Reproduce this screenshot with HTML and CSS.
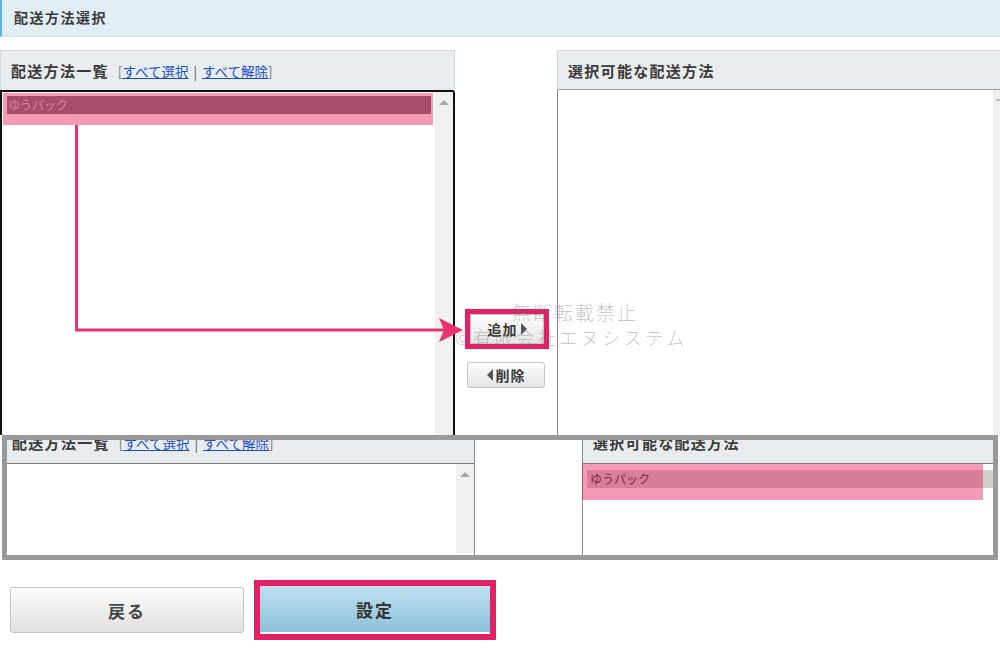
FILE: index.html
```html
<!DOCTYPE html>
<html lang="ja">
<head>
<meta charset="utf-8">
<title>配送方法選択</title>
<link rel="stylesheet" href="styles.css">
</head>
<body>
<div class="page">
  <div class="title">配送方法選択</div>

  <div class="transfer">
    <section class="pane pane-left">
      <div class="pane-head">
        <span class="pane-title">配送方法一覧</span>
        <span class="bulk">[<a href="#">すべて選択</a><span class="sep">|</span><a href="#">すべて解除</a>]</span>
      </div>
      <div class="listbox focused">
        <div class="list-body">
          <div class="item item-dim">ゆうパック</div>
        </div>
        <div class="scrollbar"><span class="arrow-up"></span></div>
      </div>
    </section>

    <div class="mover">
      <div class="callout-frame">
        <button class="btn-move btn-add">追加<span class="tri-right"></span></button>
      </div>
      <button class="btn-move btn-remove"><span class="tri-left"></span>削除</button>
    </div>

    <section class="pane pane-right">
      <div class="pane-head"><span class="pane-title">選択可能な配送方法</span></div>
      <div class="listbox plain">
        <div class="list-body"></div>
        <div class="scrollbar narrow"><span class="arrow-up small"></span></div>
      </div>
    </section>
  </div>

  <div class="inset">
    <div class="mini-left">
      <div class="mini-head">
        <span class="mini-text"><span class="pane-title">配送方法一覧</span><span class="bulk">[<a href="#">すべて選択</a><span class="sep">|</span><a href="#">すべて解除</a>]</span></span>
      </div>
      <div class="mini-list">
        <div class="mini-body"></div>
        <div class="scrollbar mini-scroll"><span class="arrow-up"></span></div>
      </div>
    </div>
    <div class="mini-mid"></div>
    <div class="mini-right">
      <div class="mini-head">
        <span class="mini-text"><span class="pane-title">選択可能な配送方法</span></span>
      </div>
      <div class="mini-list">
        <div class="mini-body">
          <div class="mini-item">ゆうパック</div>
        </div>
      </div>
    </div>
  </div>

  <div class="actions">
    <button class="btn-back">戻る</button>
    <div class="callout-frame big">
      <button class="btn-set">設定</button>
    </div>
  </div>

  <div class="hl hl-top"></div>
  <div class="hl hl-bottom"></div>

  <svg class="guide" width="470" height="345" viewBox="0 0 470 345">
    <polyline points="76.5,125 76.5,330 446,330" fill="none" stroke="#e8336e" stroke-width="3"/>
    <polygon points="463,330 439,318 444,330 439,342" fill="#e8336e"/>
  </svg>

  <div class="watermark">
    <div class="wm-line1">無断転載禁止</div>
    <div class="wm-line2">©有限会社エヌシステム</div>
  </div>
</div>
</body>
</html>
```

FILE: styles.css
```css
* { box-sizing: border-box; }

html, body {
  margin: 0;
  padding: 0;
  background: #ffffff;
}

body {
  font-family: "Noto Sans CJK JP", "Noto Sans", "Liberation Sans", sans-serif;
  color: #333333;
  width: 1000px;
  height: 648px;
  overflow: hidden;
}

.page {
  position: relative;
  width: 1000px;
  height: 648px;
}

/* title bar */
.title {
  height: 37px;
  background: #e2edf3;
  border-left: 2px solid #5fb2e6;
  border-bottom: 1px solid #cfe4ef;
  padding-left: 12px;
  font-size: 14px;
  font-weight: bold;
  letter-spacing: 1.5px;
  line-height: 35px;
  color: #3a3a3a;
}

/* transfer area */
.transfer {
  margin-top: 13px;
  height: 385px;
  display: flex;
}

.pane {
  display: flex;
  flex-direction: column;
}

.pane-left { width: 455px; }
.pane-right { width: 443px; }

.pane-head {
  height: 40px;
  background: #e9ecee;
  border: 1px solid #d3d7d9;
  border-bottom: none;
  padding-left: 10px;
  display: flex;
  align-items: center;
}

.pane-right .pane-head {
  border-right: none;
  border-bottom: 1px solid #9a9a9a;
}

.pane-title {
  font-size: 15px;
  font-weight: bold;
  letter-spacing: 1.3px;
  color: #3a3a3a;
}

.bulk {
  font-size: 13.5px;
  color: #777777;
  margin-left: 9px;
}

.bulk a {
  color: #1b4fd0;
  text-decoration: underline;
}

.sep {
  color: #555555;
  margin: 0 5px;
}

.listbox {
  flex: 1;
  display: flex;
  background: #ffffff;
}

.listbox.focused {
  border: 2px solid #111111;
  border-bottom: none;
  border-radius: 0 3px 0 0;
}

.listbox.plain {
  border-left: 1px solid #8a8a8a;
}

.list-body {
  flex: 1;
  padding: 4px 4px 0 5px;
}

.item {
  height: 18px;
  font-size: 12px;
  line-height: 18px;
  padding-left: 1px;
}

.item-dim {
  background: #7d7d80;
  color: #d4d4d4;
}

.scrollbar {
  width: 18px;
  background: #f0f0f0;
  display: flex;
  justify-content: center;
  padding-top: 8px;
}

.scrollbar.narrow {
  width: 7px;
  justify-content: flex-start;
  padding-left: 2px;
}

.arrow-up {
  width: 0;
  height: 0;
  border-left: 5px solid transparent;
  border-right: 5px solid transparent;
  border-bottom: 5px solid #a8a8a8;
}

.arrow-up.small {
  border-left-width: 3px;
  border-right-width: 3px;
  border-bottom-width: 3px;
  border-bottom-color: #b8b8b8;
}

/* mover buttons */
.mover {
  width: 102px;
  display: flex;
  flex-direction: column;
  align-items: flex-start;
  padding-top: 259px;
}

.callout-frame {
  border: 5px solid #e31f65;
  display: flex;
}

.mover .callout-frame {
  margin-left: 10px;
}

.btn-move {
  font-family: inherit;
  font-size: 14px;
  font-weight: bold;
  color: #3a3a3a;
  letter-spacing: 1px;
  background: linear-gradient(#fdfdfd, #e4e4e4);
  border: 1px solid #c6c6c6;
  border-radius: 3px;
  display: flex;
  align-items: center;
  justify-content: center;
  gap: 3px;
  padding: 0;
}

.btn-add {
  width: 74px;
  height: 30px;
  border-radius: 0;
}

.btn-remove {
  width: 78px;
  height: 26px;
  margin-top: 13px;
  margin-left: 12px;
}

.tri-right {
  width: 0;
  height: 0;
  border-top: 6px solid transparent;
  border-bottom: 6px solid transparent;
  border-left: 6px solid #555555;
}

.tri-left {
  width: 0;
  height: 0;
  border-top: 6px solid transparent;
  border-bottom: 6px solid transparent;
  border-right: 6px solid #555555;
}

/* inset capture */
.inset {
  margin: 0 2px;
  height: 125px;
  border: 5px solid #9a9a9a;
  display: flex;
  overflow: hidden;
  background: #ffffff;
}

.mini-left {
  width: 468px;
  border-right: 1px solid #8a8a8a;
  display: flex;
  flex-direction: column;
}

.mini-mid {
  width: 107px;
}

.mini-right {
  flex: 1;
  border-left: 1px solid #8a8a8a;
  display: flex;
  flex-direction: column;
}

.mini-head {
  height: 24px;
  background: #e9ecee;
  border-bottom: 1px solid #7a7a7a;
  overflow: hidden;
  padding-left: 5px;
}

.mini-right .mini-head {
  padding-left: 10px;
}

.mini-text {
  display: block;
  line-height: 16px;
  margin-top: -6px;
  white-space: nowrap;
}

.mini-list {
  flex: 1;
  display: flex;
}

.mini-body {
  flex: 1;
  padding-top: 6px;
  padding-left: 4px;
}

.mini-scroll {
  width: 18px;
  margin-bottom: 2px;
}

.mini-item {
  height: 18px;
  background: #cfcfcf;
  font-size: 12px;
  line-height: 18px;
  padding-left: 3px;
  color: #333333;
}

/* bottom actions */
.actions {
  margin-top: 20px;
  padding-left: 10px;
  display: flex;
  align-items: center;
  gap: 10px;
}

.btn-back {
  width: 234px;
  height: 46px;
  font-family: inherit;
  font-size: 17px;
  font-weight: bold;
  letter-spacing: 2px;
  color: #444444;
  background: linear-gradient(#fbfbfb, #e0e0e0);
  border: 1px solid #c4c4c4;
  border-radius: 3px;
}

.callout-frame.big {
  border-width: 6px;
}

.btn-set {
  width: 230px;
  height: 48px;
  font-family: inherit;
  font-size: 17px;
  font-weight: bold;
  letter-spacing: 2px;
  color: #333333;
  background: linear-gradient(#bfe0f0, #8cc1db);
  border: none;
  border-bottom: 2px solid #ffffff;
  padding: 0;
}

/* annotation overlays */
.hl {
  position: absolute;
  background: rgba(229, 15, 79, 0.42);
}

.hl-top {
  left: 3px;
  top: 93px;
  width: 430px;
  height: 32px;
}

.hl-bottom {
  left: 582px;
  top: 464px;
  width: 401px;
  height: 36px;
}

.guide {
  position: absolute;
  left: 0;
  top: 0;
}

.watermark {
  position: absolute;
  left: 455px;
  top: 300px;
  color: rgba(110, 110, 110, 0.4);
  font-weight: 300;
  pointer-events: none;
}

.wm-line1 {
  margin-left: 57px;
  font-size: 19px;
  letter-spacing: 2px;
  line-height: 24px;
}

.wm-line2 {
  font-size: 18px;
  letter-spacing: 3.5px;
  line-height: 26px;
}
```
